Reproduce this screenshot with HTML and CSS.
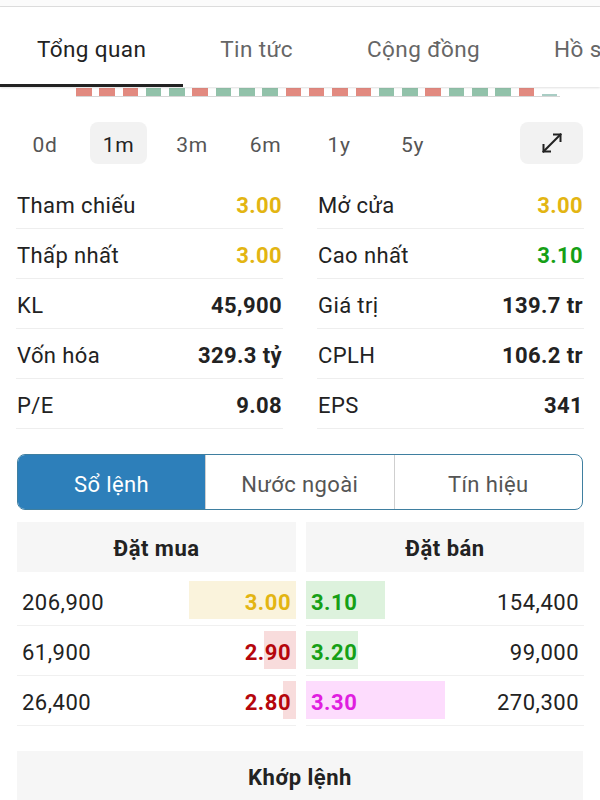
FILE: index.html
```html
<!DOCTYPE html>
<html lang="vi">
<head>
  <meta charset="UTF-8" />
  <meta name="viewport" content="width=device-width, initial-scale=1.0"/>
  <title>Tổng quan</title>
  <link rel="stylesheet" href="styles.css">
</head>
<body>
  <div class="topline"></div>
  <nav class="tabs">
    <div class="tab active">Tổng quan</div>
    <div class="tab">Tin tức</div>
    <div class="tab">Cộng đồng</div>
    <div class="tab">Hồ sơ</div>
  </nav>

  <div class="strip">
    <span class="bar r"></span><span class="bar r"></span><span class="bar r"></span>
    <span class="bar g"></span><span class="bar g"></span><span class="bar r"></span>
    <span class="bar g"></span><span class="bar g"></span><span class="bar g"></span>
    <span class="bar r"></span><span class="bar r"></span><span class="bar r"></span>
    <span class="bar r"></span><span class="bar g"></span><span class="bar g"></span>
    <span class="bar r"></span><span class="bar g"></span><span class="bar g"></span>
    <span class="bar g"></span><span class="bar r"></span><span class="bar last"></span>
  </div>

  <div class="periods">
    <div class="period">0d</div>
    <div class="period sel">1m</div>
    <div class="period">3m</div>
    <div class="period">6m</div>
    <div class="period">1y</div>
    <div class="period">5y</div>
    <div class="expand">
      <svg width="26" height="26" viewBox="0 0 26 26" fill="none" stroke="#222" stroke-width="2" stroke-linecap="square">
        <line x1="4.5" y1="21.5" x2="21.5" y2="4.5"/>
        <polyline points="15,4.5 21.5,4.5 21.5,11"/>
        <polyline points="4.5,15 4.5,21.5 11,21.5"/>
      </svg>
    </div>
  </div>

  <div class="stats">
    <div class="row"><span>Tham chiếu</span><b class="yellow">3.00</b></div>
    <div class="row"><span>Mở cửa</span><b class="yellow">3.00</b></div>
    <div class="row"><span>Thấp nhất</span><b class="yellow">3.00</b></div>
    <div class="row"><span>Cao nhất</span><b class="green">3.10</b></div>
    <div class="row"><span>KL</span><b>45,900</b></div>
    <div class="row"><span>Giá trị</span><b>139.7 tr</b></div>
    <div class="row"><span>Vốn hóa</span><b>329.3 tỷ</b></div>
    <div class="row"><span>CPLH</span><b>106.2 tr</b></div>
    <div class="row"><span>P/E</span><b>9.08</b></div>
    <div class="row"><span>EPS</span><b>341</b></div>
  </div>

  <div class="segment">
    <div class="seg on">Sổ lệnh</div>
    <div class="seg">Nước ngoài</div>
    <div class="seg">Tín hiệu</div>
  </div>

  <div class="book">
    <div class="side">
      <div class="head">Đặt mua</div>
      <div class="line"><span>206,900</span><b class="px yellow"><i class="fill bg-yellow" style="width:107px"></i>3.00</b></div>
      <div class="line"><span>61,900</span><b class="px red"><i class="fill bg-red" style="width:32px"></i>2.90</b></div>
      <div class="line"><span>26,400</span><b class="px red"><i class="fill bg-red" style="width:13px"></i>2.80</b></div>
    </div>
    <div class="side ask">
      <div class="head">Đặt bán</div>
      <div class="line"><b class="px green"><i class="fill bg-green" style="width:79px"></i>3.10</b><span>154,400</span></div>
      <div class="line"><b class="px green"><i class="fill bg-green" style="width:52px"></i>3.20</b><span>99,000</span></div>
      <div class="line"><b class="px purple"><i class="fill bg-purple" style="width:139px"></i>3.30</b><span>270,300</span></div>
    </div>
  </div>

  <div class="match">Khớp lệnh</div>
</body>
</html>
```

FILE: styles.css
```css
body {
  margin: 0;
  font-family: Roboto, "Noto Sans", sans-serif;
  color: #222;
  background: #fff;
  overflow: hidden;
  letter-spacing: 0.4px;
}
.topline {
  height: 6px;
  background: #fbfbfb;
  border-bottom: 1px solid #dedede;
}
.tabs {
  display: flex;
  height: 80px;
  white-space: nowrap;
  overflow: hidden;
  position: relative;
  z-index: 2;
  background: #fff;
  box-shadow: 0 1px 2px rgba(0,0,0,0.12);
}
.tab {
  flex: none;
  padding: 6px 37px 0;
  font-size: 22.5px;
  color: #666;
  display: flex;
  align-items: center;
  box-sizing: border-box;
  border-bottom: 3px solid transparent;
}
.tab.active {
  color: #222;
  border-bottom-color: #222;
}
.strip {
  display: flex;
  align-items: flex-end;
  gap: 7.8px;
  height: 8px;
  margin: 0 40px 0 76px;
  padding-top: 1px;
  border-bottom: 1px solid #d6d6d6;
  width: 484px;
}
.bar {
  width: 15.5px;
  height: 8px;
  flex: none;
}
.r { background: #e28a80; }
.g { background: #92c2aa; }
.bar.last {
  height: 2px;
  background: #a9cdc4;
}
.periods {
  display: flex;
  align-items: center;
  padding: 0 17px;
  margin-top: 25px;
  height: 42px;
}
.period {
  width: 57px;
  height: 42px;
  margin-right: 16.5px;
  padding-top: 3px;
  box-sizing: border-box;
  display: flex;
  align-items: center;
  justify-content: center;
  font-size: 21px;
  letter-spacing: 0.6px;
  color: #555;
  border-radius: 8px;
}
.period:first-child {
  width: 56px;
  margin-right: 17px;
}
.period.sel {
  background: #f2f2f2;
  color: #222;
}
.expand {
  margin-left: auto;
  width: 63px;
  height: 42px;
  border-radius: 8px;
  background: #f2f2f2;
  display: flex;
  align-items: center;
  justify-content: center;
}
.stats {
  display: grid;
  grid-template-columns: 1fr 1fr;
  column-gap: 34px;
  padding: 0 16px;
  margin-top: 15px;
}
.row {
  height: 49px;
  padding: 3px 1px 0;
  box-sizing: content-box;
  height: 46px;
  border-bottom: 1px solid #eee;
  display: flex;
  justify-content: space-between;
  align-items: center;
  font-size: 22px;
}
.row b {
  font-weight: 700;
}
.yellow { color: #e3b512; }
.green { color: #16a016; }
.red { color: #b5060c; }
.purple { color: #e01ee0; }
.segment {
  display: flex;
  margin: 25px 17px 0;
  height: 56px;
  box-sizing: border-box;
  border: 1.5px solid #3f7fa0;
  border-radius: 8px;
  overflow: hidden;
}
.seg {
  flex: 1;
  display: flex;
  align-items: center;
  justify-content: center;
  padding-top: 4px;
  font-size: 22px;
  color: #555;
  border-left: 1px solid #cfcfcf;
}
.seg:first-child {
  border-left: none;
}
.seg.on {
  background: #2d7fba;
  color: #fff;
  flex: 0 0 187px;
}
.book {
  display: grid;
  grid-template-columns: 279px 278px;
  column-gap: 10px;
  margin: 12px 17px 0;
}
.head {
  height: 47px;
  padding-top: 3px;
  background: #f6f6f6;
  display: flex;
  align-items: center;
  justify-content: center;
  font-size: 22px;
  letter-spacing: 0.5px;
  font-weight: 700;
  margin-bottom: 4px;
}
.line {
  height: 49px;
  border-bottom: 1px solid #f0f0f0;
  display: flex;
  justify-content: space-between;
  align-items: flex-start;
  font-size: 22px;
  letter-spacing: 0.5px;
}
.line span {
  align-self: center;
  padding: 4px 5px 0;
}
.px {
  position: relative;
  height: 38px;
  margin-top: 5px;
  padding: 4px 5px 0;
  box-sizing: border-box;
  display: flex;
  align-items: center;
  font-weight: 700;
}
.fill {
  position: absolute;
  top: 0;
  bottom: 0;
  right: 0;
  z-index: -1;
}
.ask .fill {
  right: auto;
  left: 0;
}
.bg-yellow { background: #faf3dc; }
.bg-red { background: #f8dcdc; }
.bg-green { background: #ddf2dd; }
.bg-purple { background: #fddcfd; }
.match {
  margin: 25px 17px 0;
  height: 47px;
  padding-top: 3px;
  background: #f6f6f6;
  display: flex;
  align-items: center;
  justify-content: center;
  font-size: 22px;
  letter-spacing: 0.5px;
  font-weight: 700;
}
```
